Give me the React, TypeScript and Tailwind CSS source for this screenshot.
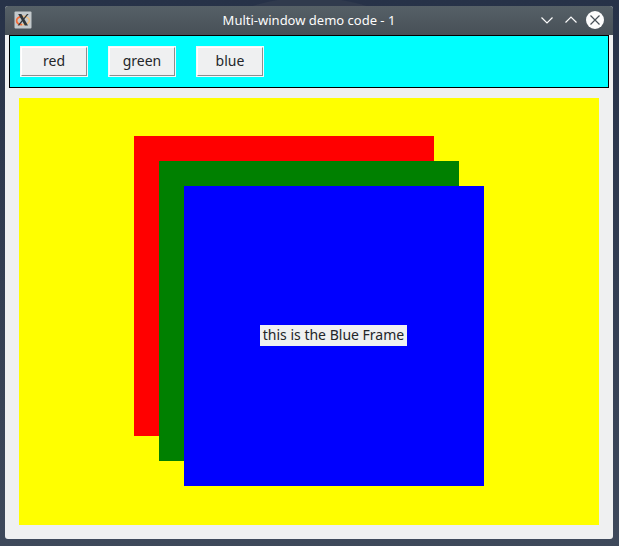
import { useState } from "react";

type FrameName = "red" | "green" | "blue";

const frames: { name: FrameName; title: string; style: string }[] = [
  { name: "red", title: "Red", style: "top-0 left-0 bg-[#ff0000]" },
  { name: "green", title: "Green", style: "top-[25px] left-[25px] bg-[#008000]" },
  { name: "blue", title: "Blue", style: "top-[50px] left-[50px] bg-[#0000ff]" },
];

function AppIcon() {
  return (
    <svg className="size-[18px]" viewBox="0 0 18 18" aria-hidden="true">
      <rect x="0.5" y="0.5" width="17" height="17" rx="1" fill="#c3c9cc" />
      <ellipse cx="9" cy="9.5" rx="6.4" ry="4.2" fill="none" stroke="#f0bd80" strokeWidth="1.5" />
      <path d="M8.5 5.3C4.5 5.6 2.4 7.6 2.6 9.8c.2 2.2 2.4 3.7 5.4 3.9" fill="none" stroke="#ee6a3c" strokeWidth="1.7" />
      <path d="M4.2 3h3.2l6.6 11.5h-3.2z" fill="#30363a" />
      <path d="M13 3h1.6L5.2 14.5H3.6z" fill="#30363a" />
    </svg>
  );
}

function TitleBar() {
  return (
    <header className="grid h-[29px] shrink-0 grid-cols-[1fr_auto_1fr] items-center rounded-t-[3px] bg-linear-to-b from-[#566067] to-[#475057] px-[9px] pb-px">
      <AppIcon />
      <h1 className="text-[13px] leading-5 text-[#fcfcfc]">Multi-window demo code - 1</h1>
      <div className="flex items-center justify-end gap-[6px]">
        <button type="button" aria-label="Minimize" className="size-[18px]">
          <svg viewBox="0 0 18 18" fill="none" stroke="#fcfcfc" strokeWidth="1.2">
            <path d="M3.5 6.5 9 12l5.5-5.5" />
          </svg>
        </button>
        <button type="button" aria-label="Maximize" className="size-[18px]">
          <svg viewBox="0 0 18 18" fill="none" stroke="#fcfcfc" strokeWidth="1.2">
            <path d="M3.5 11.5 9 6l5.5 5.5" />
          </svg>
        </button>
        <button type="button" aria-label="Close" className="size-[18px]">
          <svg viewBox="0 0 18 18" fill="none">
            <circle cx="9" cy="9" r="9" fill="#fcfcfc" />
            <path d="m4.5 4.5 9 9m0-9-9 9" stroke="#475057" strokeWidth="1.2" />
          </svg>
        </button>
      </div>
    </header>
  );
}

export default function App() {
  const [raised, setRaised] = useState<FrameName>("blue");

  return (
    <div className="flex h-screen flex-col bg-[radial-gradient(circle_at_50%_191px,#303a4d_193px,transparent_194px),linear-gradient(to_bottom,#273248,#3e495b)] pt-[6px] pr-[6px] pb-[7px] pl-[5px] font-['Noto_Sans',sans-serif]">
      <div className="flex grow flex-col rounded-[3px] bg-[#eff0f1]">
        <TitleBar />
        <main className="flex grow flex-col px-1">
          <nav className="flex gap-5 border border-black bg-[#00ffff] p-[10px]">
            {frames.map(({ name }) => (
              <button
                key={name}
                type="button"
                onClick={() => setRaised(name)}
                className="h-[31px] w-[68px] border border-[#f6f7f7] bg-[#eff0f1] text-[14px] text-[#232629]"
              >
                <span className="flex h-[29px] items-center justify-center border border-t-white border-r-[#8c8e8f] border-b-[#8c8e8f] border-l-white pb-[2px]">
                  {name}
                </span>
              </button>
            ))}
          </nav>
          <section className="mx-[10px] mt-[10px] mb-[14px] flex grow items-center justify-center bg-[#ffff00] pb-px">
            <div className="relative size-[350px]">
              {frames.map(({ name, title, style }) => (
                <div
                  key={name}
                  className={`absolute flex size-[300px] items-center justify-center pr-px pb-px ${style} ${raised === name ? "z-10" : "z-0"}`}
                >
                  {raised === name && (
                    <p className="min-w-[147px] bg-[#eff0f1] px-[2px] pb-[2px] text-center text-[14px] leading-[19px] text-[#232629]">
                      this is the {title} Frame
                    </p>
                  )}
                </div>
              ))}
            </div>
          </section>
        </main>
      </div>
    </div>
  );
}
